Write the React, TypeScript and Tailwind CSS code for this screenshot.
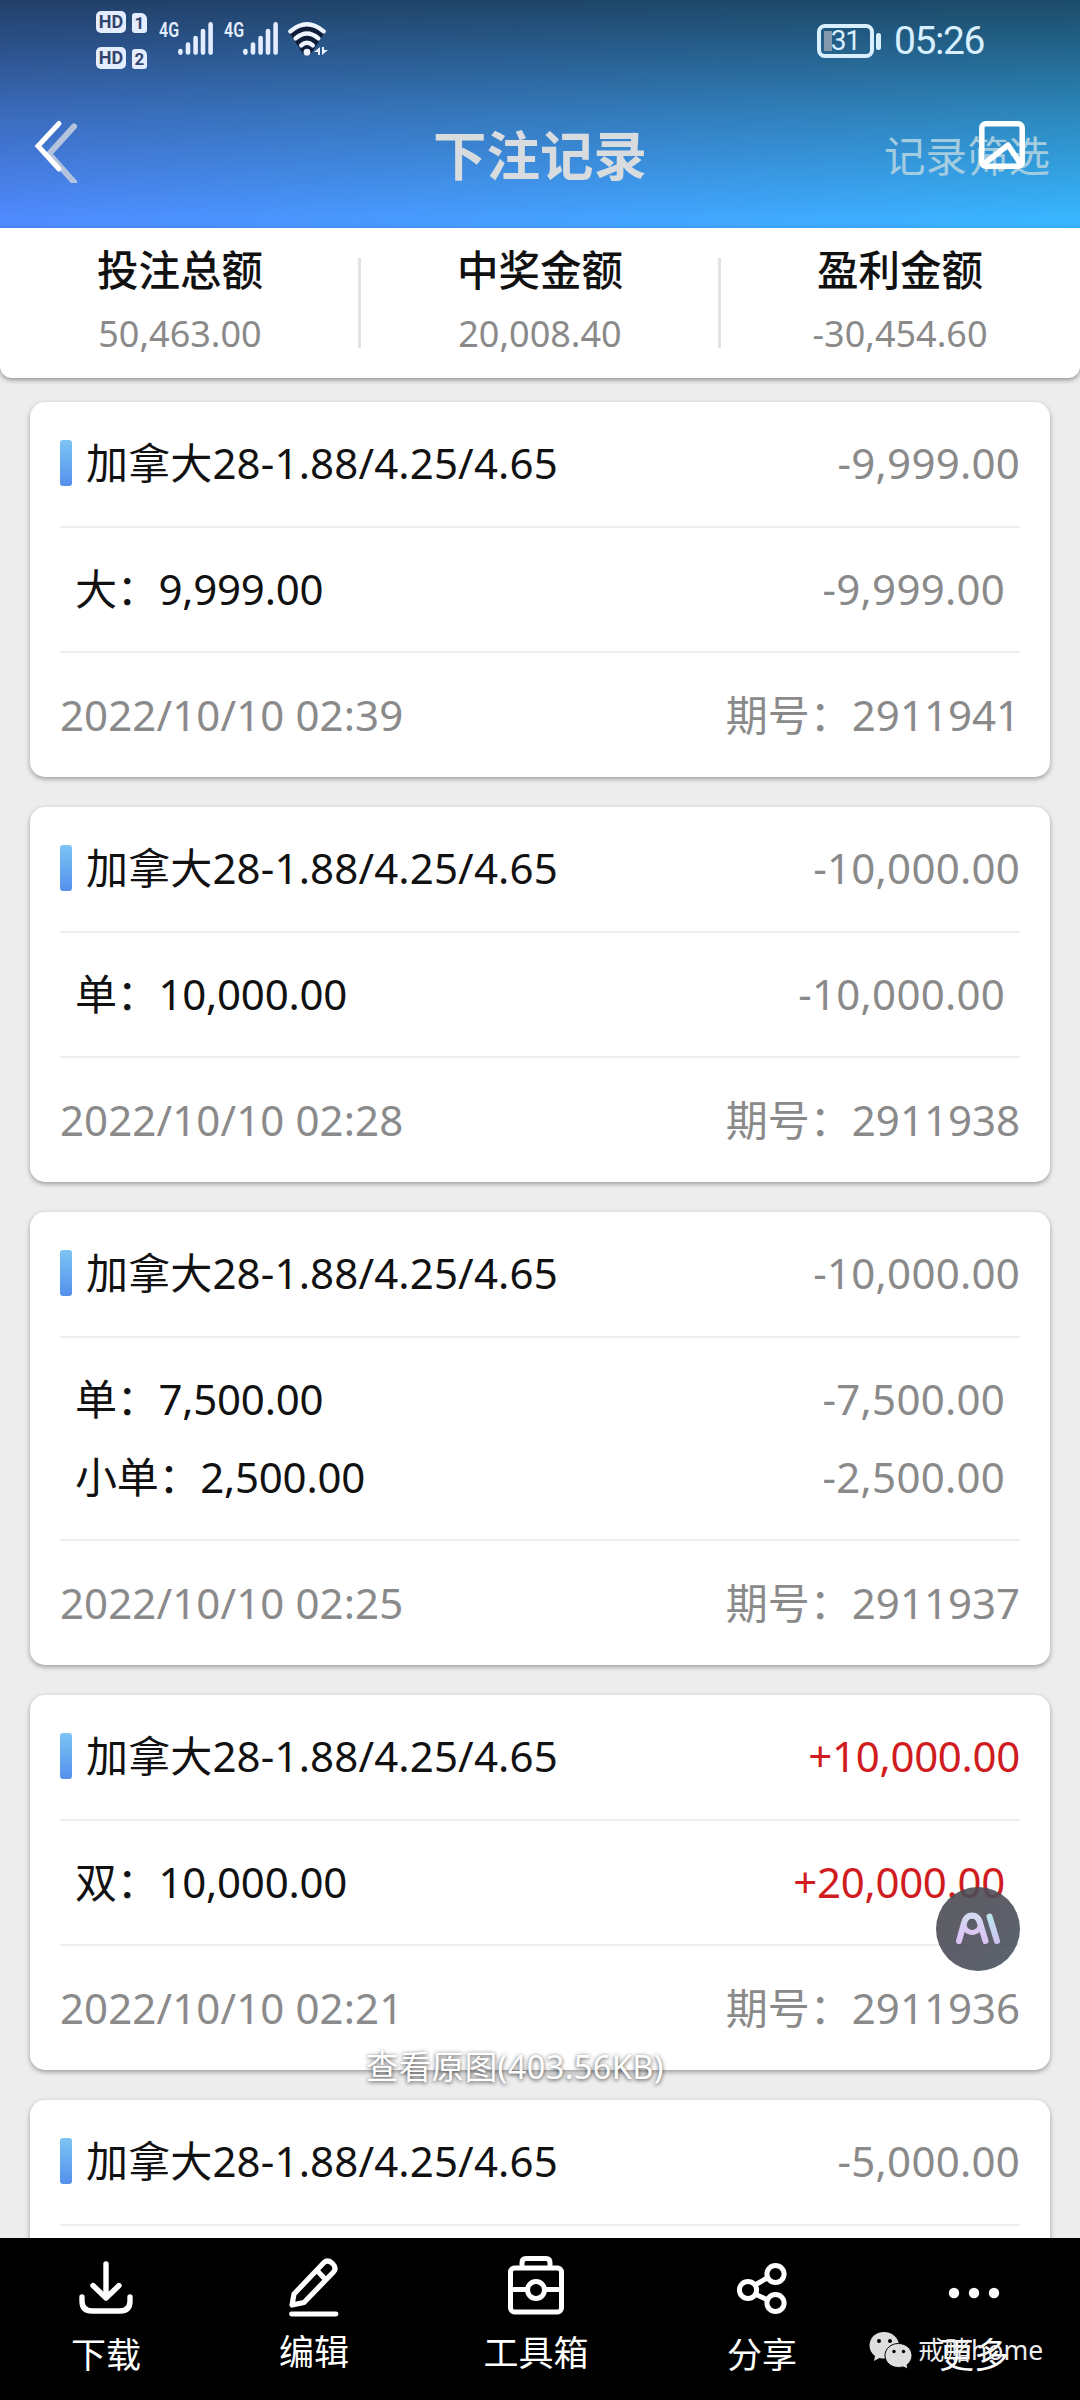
import React from 'react';

interface BetItem {
  name: string;
  stake: string;
  result: string;
}

interface BetRecord {
  id: string;
  total: string;
  time: string;
  items: BetItem[];
}

const GAME = '加拿大28-1.88/4.25/4.65';

const summary = [
  { label: '投注总额', value: '50,463.00' },
  { label: '中奖金额', value: '20,008.40' },
  { label: '盈利金额', value: '-30,454.60' },
];

const records: BetRecord[] = [
  {
    id: '2911941',
    total: '-9,999.00',
    time: '2022/10/10 02:39',
    items: [{ name: '大', stake: '9,999.00', result: '-9,999.00' }],
  },
  {
    id: '2911938',
    total: '-10,000.00',
    time: '2022/10/10 02:28',
    items: [{ name: '单', stake: '10,000.00', result: '-10,000.00' }],
  },
  {
    id: '2911937',
    total: '-10,000.00',
    time: '2022/10/10 02:25',
    items: [
      { name: '单', stake: '7,500.00', result: '-7,500.00' },
      { name: '小单', stake: '2,500.00', result: '-2,500.00' },
    ],
  },
  {
    id: '2911936',
    total: '+10,000.00',
    time: '2022/10/10 02:21',
    items: [{ name: '双', stake: '10,000.00', result: '+20,000.00' }],
  },
  {
    id: '',
    total: '-5,000.00',
    time: '',
    items: [],
  },
];

const amountColor = (value: string) =>
  value.startsWith('+') ? 'text-[#d01c20] -tracking-[0.3px]' : 'text-[#8a8a8a] tracking-[0.25px]';

const HdBadge: React.FC<{ sim: string }> = ({ sim }) => (
  <div className="flex h-[22px] items-end gap-1.5 font-['Roboto'] font-bold text-[#33446b]">
    <span className="flex h-[22px] w-[30px] items-center justify-center rounded-[5px] bg-[#e4ecff] text-[18px] leading-none">
      HD
    </span>
    <span className="flex h-[20px] w-[15px] items-center justify-center rounded-[3px] rounded-tr-[6px] bg-[#e4ecff] text-[17px] leading-none">
      {sim}
    </span>
  </div>
);

const Signal: React.FC = () => (
  <div className="flex h-[33px] items-start">
    <span className="w-[19px] origin-left scale-x-[0.8] font-['Roboto'] text-[20px] leading-[17px] font-semibold text-[#e4ecff]">
      4G
    </span>
    <svg className="h-[33px] w-[35px]" viewBox="0 0 35 33" stroke="#e4ecff" strokeWidth="4.6" strokeLinecap="round">
      <path d="M2.4 29v1.6M10 22.5v8M17.6 16v14.6M25 9v21.6M32.6 2.4v28.2" />
    </svg>
  </div>
);

const Wifi: React.FC = () => (
  <svg className="h-[34px] w-[40px]" viewBox="0 0 40 34" fill="none">
    <path d="M1 10Q19 -6 37 10L22 33L15 32Z" fill="#0e1c38" />
    <g stroke="#eef4ff" strokeWidth="4.4" strokeLinecap="round">
      <path d="M2.4 9.4Q19 -4.8 35.6 9.4" />
      <path d="M7.6 16.4Q19 6.6 30.4 16.4" />
      <path d="M13.2 23.4Q19 18 24.8 23.4" />
    </g>
    <circle cx="19" cy="30.2" r="3.4" fill="#eef4ff" />
    <path d="M26 30l6-5v8h-2v-3zM34 25v8l6-5h-4v-3z" fill="#eef4ff" />
  </svg>
);

const StatusBar: React.FC = () => (
  <div className="flex h-[78px] items-start justify-between pr-[96px] pl-24">
    <div className="flex items-start">
      <div className="flex flex-col gap-[14px] pt-[11px]">
        <HdBadge sim="1" />
        <HdBadge sim="2" />
      </div>
      <div className="flex pt-[22px] pl-[12px]">
        <Signal />
        <div className="ml-[11px]">
          <Signal />
        </div>
        <div className="ml-[10px]">
          <Wifi />
        </div>
      </div>
    </div>
    <div className="flex items-center pt-[23px] text-[#d8efff]">
      <div className="relative flex h-[34px] w-[57px] items-center justify-center rounded-[8px] border-4 border-current">
        <span className="absolute top-[3px] left-[3px] h-5 w-[8px] bg-[#8497ad]" />
        <span className="relative font-['Roboto'] text-[28px] leading-none -tracking-[1px]">31</span>
      </div>
      <span className="ml-[2px] h-[17px] w-[5px] rounded-sm bg-current" />
      <span className="ml-[13px] font-['Roboto'] text-[39px] leading-[36px] -tracking-[1.4px]">05:26</span>
    </div>
  </div>
);

const Header: React.FC = () => (
  <header className="h-[228px] shrink-0 bg-[linear-gradient(to_bottom,rgba(16,34,46,0.72),rgba(20,46,58,0.34)_50%,rgba(20,50,52,0)_96%),linear-gradient(to_right,#4f8aff,#45a0ff_50%,#38b6ff)]">
    <StatusBar />
    <div className="grid h-[156px] grid-cols-3 items-center pr-[30px] pl-[34px]">
      <svg className="mb-[13px] h-[66px] w-[44px]" viewBox="0 0 44 66" fill="none" strokeLinecap="round">
        <path d="M40 9.500L15 37L40 65" stroke="#b4c3dc" strokeWidth="6" />
        <path d="M25 6.500L4 29L25 52" stroke="#fff" strokeWidth="5" />
      </svg>
      <h1 className="pr-1 text-center text-[53.5px] leading-none font-bold text-[#d9dcdf]">下注记录</h1>
      <div className="relative justify-self-end">
        <span className="text-[41.5px] leading-[60px] text-[#a4cce0]">记录筛选</span>
        <svg
          className="absolute -top-[5px] left-[95px] h-[48px] w-[46px]"
          viewBox="0 0 46 48"
          fill="none"
          stroke="#fff"
          strokeWidth="5.5"
          strokeLinejoin="round"
        >
          <rect x="2.8" y="2.8" width="40.4" height="42.4" rx="4" />
          <path d="M5 43L29 24L41 42" />
        </svg>
      </div>
    </div>
  </header>
);

const Summary: React.FC = () => (
  <section className="grid h-[150px] shrink-0 grid-cols-3 rounded-b-xl bg-white shadow-[0_2px_5px_rgba(0,0,0,0.4)]">
    {summary.map((s, i) => (
      <div key={s.label} className="relative flex flex-col items-center pt-[14px]">
        <span className="text-[41.5px] leading-[56px] font-medium text-[#111]">{s.label}</span>
        <span className="mt-2 text-[36px] leading-[56px] text-[#8a8a8a]">{s.value}</span>
        {i > 0 && <span className="absolute top-[30px] -left-[2px] h-[90px] w-[3px] bg-[#e2e2e2]" />}
      </div>
    ))}
  </section>
);

const RecordCard: React.FC<{ record: BetRecord }> = ({ record }) => (
  <article className="shrink-0 rounded-[15px] bg-white px-[30px] shadow-[0_2px_5px_rgba(0,0,0,0.35)]">
    <div className="flex h-[126px] items-center border-b-2 border-[#eeeeee] pb-[3px]">
      <span className="mr-[14px] h-[46px] w-3 rounded-[3px] bg-linear-to-b from-[#7cc4f4] to-[#5590ec]" />
      <span className="text-[42px] leading-none tracking-[0.15px] text-[#111]">{GAME}</span>
      <span className={`ml-auto text-[42px] leading-none ${amountColor(record.total)}`}>{record.total}</span>
    </div>
    {record.items.length > 0 ? (
      <div className="border-b-2 border-[#eeeeee] px-[15px] pt-[22px] pb-[23px]">
        {record.items.map((item) => (
          <div key={item.name} className="flex h-[78px] items-center justify-between text-[42px] leading-none">
            <span className="-tracking-[0.25px] text-[#111]">
              {item.name}：{item.stake}
            </span>
            <span className={amountColor(item.result)}>{item.result}</span>
          </div>
        ))}
      </div>
    ) : (
      <div className="h-[124px]" />
    )}
    {record.time && (
      <div className="flex h-[124px] items-center justify-between text-[42px] leading-none text-[#8a8a8a]">
        <span className="tracking-[0.1px]">{record.time}</span>
        <span>期号：{record.id}</span>
      </div>
    )}
  </article>
);

const DownloadIcon = () => (
  <svg className="h-[60px] w-[60px]" viewBox="0 0 60 60" fill="none" stroke="#fff" strokeWidth="5.4" strokeLinecap="round" strokeLinejoin="round">
    <path d="M30 8V41M17 29.500L30 42L43 29.500M6 41v4q0 10 10 10h28q10 0 10-10v-4" />
  </svg>
);

const EditIcon = () => (
  <svg className="h-[64px] w-[60px]" viewBox="0 0 60 64" fill="none" stroke="#fff" strokeWidth="5.2" strokeLinecap="round" strokeLinejoin="round">
    <path d="M8 50L10 39L40 7.500Q44 4 48.500 8.500Q53 13 49.500 17L20 47.500ZM33 15.500L41.500 24.500" />
    <path d="M7.500 59H52" strokeWidth="4.800" />
  </svg>
);

const ToolboxIcon = () => (
  <svg className="h-[60px] w-[60px]" viewBox="0 0 60 60" fill="none" stroke="#fff" strokeWidth="5" strokeLinejoin="round">
    <rect x="4.500" y="13" width="51" height="44" rx="4" />
    <path d="M16 13V8q0-4.500 4-4.500h20q4 0 4 4.500v5M4.500 34.500H21M39 34.500H55.500" />
    <circle cx="30" cy="35" r="8.500" />
  </svg>
);

const ShareIcon = () => (
  <svg className="h-[60px] w-[60px]" viewBox="0 0 60 60" fill="none" stroke="#fff" strokeWidth="5">
    <circle cx="16" cy="34" r="8.600" />
    <circle cx="43.500" cy="18" r="8.600" />
    <circle cx="43.500" cy="47" r="8.600" />
    <path d="M23 29L36 21.500M23 38L36 44" />
  </svg>
);

const MoreIcon = () => (
  <svg className="h-[60px] w-[60px]" viewBox="0 0 60 60" fill="#fff">
    <circle cx="10" cy="37" r="5.200" />
    <circle cx="30" cy="37" r="5.200" />
    <circle cx="50" cy="37" r="5.200" />
  </svg>
);

const actions = [
  { label: '下载', icon: <DownloadIcon />, className: 'pt-[18px]' },
  { label: '编辑', icon: <EditIcon />, className: 'pt-[17px] pb-[3px]' },
  { label: '工具箱', icon: <ToolboxIcon />, className: 'pt-[17px] pb-[2px]' },
  { label: '分享', icon: <ShareIcon />, className: 'pt-[18px]' },
  { label: '更多', icon: <MoreIcon />, className: 'pt-[18px]' },
];

const WechatMark: React.FC = () => (
  <div className="absolute top-[93px] left-[869px] flex items-center">
    <svg className="h-[38px] w-[43px]" viewBox="0 0 43 38">
      <path d="M15 1C6.800 1 0.500 6.800 0.500 14.500c0 4.500 2.200 8 5.500 10.500l-1 5 5.500-3c1.500 0.400 3 0.500 4.500 0.500 8.200 0 15-5.800 15-13S23.200 1 15 1z" fill="#dedede" />
      <path d="M29.500 12.500c-7.500 0-13.500 5.200-13.500 12s6 12 13.500 12c1.600 0 3-0.200 4.400-0.600l5 2-0.800-4.200c3-2.200 4.900-5.400 4.900-9.200 0-6.800-6-12-13.500-12z" fill="#dedede" stroke="#000" strokeWidth="1" />
      <circle cx="10" cy="10" r="2" />
      <circle cx="21" cy="10" r="2" />
      <circle cx="25" cy="20.500" r="1.700" />
      <circle cx="34.500" cy="20.500" r="1.700" />
    </svg>
    <span className="ml-[6px] text-[26.5px] leading-[38px] whitespace-nowrap text-[#ececec]">戒赌home</span>
  </div>
);

const Toolbar: React.FC = () => (
  <nav className="relative grid h-[162px] shrink-0 grid-cols-[212px_204px_240px_212px_212px] bg-black">
    {actions.map((a) => (
      <button key={a.label} type="button" className={`flex flex-col items-center ${a.className}`}>
        {a.icon}
        <span className="mt-auto mb-[22px] text-[35px] leading-[46px] text-white">{a.label}</span>
      </button>
    ))}
    <WechatMark />
  </nav>
);

const AiButton: React.FC = () => (
  <button type="button" aria-label="AI" className="absolute top-[1887px] left-[936px] h-[84px] w-[84px] rounded-full bg-linear-to-br from-[#4a4b52]/90 via-[#4c4c58]/90 to-[#465460]/90">
    <svg viewBox="0 0 84 84" fill="none" strokeLinecap="round" strokeWidth="6">
      <defs>
        <linearGradient id="ai-a" x1="0" y1="0" x2="0" y2="1">
          <stop offset="0" stopColor="#d3dbf4" />
          <stop offset="1" stopColor="#dcc4f4" />
        </linearGradient>
        <linearGradient id="ai-i" x1="0" y1="0" x2="0" y2="1">
          <stop offset="0" stopColor="#b8e4ea" />
          <stop offset="1" stopColor="#d0c4f4" />
        </linearGradient>
      </defs>
      <path d="M23 54L28 36Q30 28.500 36 28.500Q42 28.500 44 36L49.500 54" stroke="url(#ai-a)" />
      <circle cx="36.200" cy="37.200" r="8.300" stroke="url(#ai-a)" strokeWidth="5" />
      <path d="M53.500 29.500L61 54" stroke="url(#ai-i)" />
    </svg>
  </button>
);

const App: React.FC = () => (
  <div className="relative flex h-[2400px] w-[1080px] flex-col overflow-hidden bg-[#ededed] font-['Noto_Sans','Noto_Sans_CJK_SC',sans-serif]">
    <Header />
    <Summary />
    <main className="flex min-h-0 flex-1 flex-col gap-[30px] overflow-hidden px-[30px] pt-6">
      {records.map((r) => (
        <RecordCard key={r.time || 'last'} record={r} />
      ))}
    </main>
    <Toolbar />

    <div className="absolute top-[2045px] left-[366px] text-[32.5px] leading-[44px] tracking-[0.4px] whitespace-nowrap text-white [text-shadow:0_1px_4px_rgba(0,0,0,0.75)]">
      查看原图(403.56KB)
    </div>
    <AiButton />
  </div>
);

export default App;
